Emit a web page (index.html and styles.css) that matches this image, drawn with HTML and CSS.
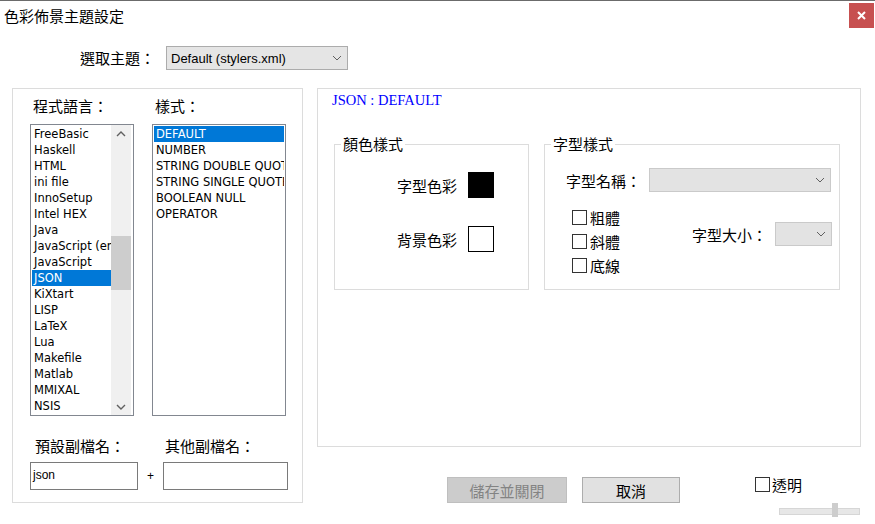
FILE: index.html
```html
<!DOCTYPE html>
<html lang="zh-Hant">
<head>
<meta charset="utf-8">
<title>色彩佈景主題設定</title>
<link rel="stylesheet" href="styles.css">
</head>
<body>
<div class="titlebar">
  <span class="title">色彩佈景主題設定</span>
  <div class="close">
    <svg width="9" height="9" viewBox="0 0 9 9"><path d="M1 1 L8 8 M8 1 L1 8" stroke="#fff" stroke-width="2" fill="none"/></svg>
  </div>
</div>

<div class="theme-row">
  <span class="theme-label">選取主題：</span>
  <div class="combo theme-combo">
    <span>Default (stylers.xml)</span>
    <svg class="chev" width="10" height="6" viewBox="0 0 10 6"><path d="M1 1 L5 5 L9 1" stroke="#606060" stroke-width="1" fill="none"/></svg>
  </div>
</div>

<div class="main">
  <section class="left-panel">
    <div class="lists">
      <div class="lang-col">
        <div class="label lbl-lang">程式語言：</div>
        <div class="listbox lang-list">
          <ul class="items">
            <li>FreeBasic</li>
            <li>Haskell</li>
            <li>HTML</li>
            <li>ini file</li>
            <li>InnoSetup</li>
            <li>Intel HEX</li>
            <li>Java</li>
            <li>JavaScript (embedded)</li>
            <li>JavaScript</li>
            <li class="sel">JSON</li>
            <li>KiXtart</li>
            <li>LISP</li>
            <li>LaTeX</li>
            <li>Lua</li>
            <li>Makefile</li>
            <li>Matlab</li>
            <li>MMIXAL</li>
            <li>NSIS</li>
          </ul>
          <div class="scrollbar">
            <div class="sb-btn">
              <svg width="10" height="6" viewBox="0 0 10 6"><path d="M1 5 L5 1 L9 5" stroke="#606060" stroke-width="1.4" fill="none"/></svg>
            </div>
            <div class="sb-track"><div class="sb-thumb"></div></div>
            <div class="sb-btn">
              <svg width="10" height="6" viewBox="0 0 10 6"><path d="M1 1 L5 5 L9 1" stroke="#606060" stroke-width="1.4" fill="none"/></svg>
            </div>
          </div>
        </div>
      </div>
      <div class="style-col">
        <div class="label lbl-style">樣式：</div>
        <div class="listbox style-list">
          <ul class="items">
            <li class="sel">DEFAULT</li>
            <li>NUMBER</li>
            <li>STRING DOUBLE QUOTE</li>
            <li>STRING SINGLE QUOTE</li>
            <li>BOOLEAN NULL</li>
            <li>OPERATOR</li>
          </ul>
        </div>
      </div>
    </div>
    <div class="ext-row">
      <div class="ext-col ext-default">
        <div class="label lbl-def">預設副檔名：</div>
        <div class="textbox">json</div>
      </div>
      <span class="plus">+</span>
      <div class="ext-col ext-other">
        <div class="label lbl-other">其他副檔名：</div>
        <div class="textbox"></div>
      </div>
    </div>
  </section>

  <div class="right-col">
    <section class="right-panel">
      <div class="heading">JSON : DEFAULT</div>
      <div class="groups">
        <fieldset class="group color-group">
          <legend>顏色樣式</legend>
          <div class="color-rows">
            <div class="color-row"><span>字型色彩</span><div class="swatch fg"></div></div>
            <div class="color-row"><span>背景色彩</span><div class="swatch bg"></div></div>
          </div>
        </fieldset>
        <fieldset class="group font-group">
          <legend>字型樣式</legend>
          <div class="font-body">
            <div class="name-row">
              <span>字型名稱：</span>
              <div class="combo dis name-combo">
                <span></span>
                <svg class="chev" width="10" height="6" viewBox="0 0 10 6"><path d="M1 1 L5 5 L9 1" stroke="#606060" stroke-width="1" fill="none"/></svg>
              </div>
            </div>
            <div class="style-row">
              <div class="checks">
                <div class="check"><span class="box"></span><span>粗體</span></div>
                <div class="check"><span class="box"></span><span>斜體</span></div>
                <div class="check"><span class="box"></span><span>底線</span></div>
              </div>
              <div class="size-area">
                <span>字型大小：</span>
                <div class="combo dis size-combo">
                  <span></span>
                  <svg class="chev" width="10" height="6" viewBox="0 0 10 6"><path d="M1 1 L5 5 L9 1" stroke="#606060" stroke-width="1" fill="none"/></svg>
                </div>
              </div>
            </div>
          </div>
        </fieldset>
      </div>
    </section>

    <div class="actions">
      <div class="btn disabled save">儲存並關閉</div>
      <div class="btn cancel">取消</div>
      <div class="trans">
        <div class="check"><span class="box"></span><span>透明</span></div>
        <div class="slider"><div class="thumb"></div></div>
      </div>
    </div>
  </div>
</div>
</body>
</html>
```

FILE: styles.css
```css
* { box-sizing: border-box; }
html, body { margin: 0; padding: 0; }
body {
  width: 875px;
  height: 524px;
  overflow: hidden;
  background: #fff;
  border-top: 1px solid #6b6b6b;
  font-family: "Noto Sans CJK TC", "Noto Sans CJK SC", sans-serif;
  font-size: 15px;
  color: #000;
}

/* title bar */
.titlebar {
  display: flex;
  justify-content: space-between;
  align-items: flex-start;
  height: 30px;
}
.title {
  padding-left: 4px;
  line-height: 30px;
  font-size: 15px;
}
.close {
  width: 25px;
  height: 25px;
  margin: 2px 1px 0 0;
  background: #c75050;
  display: flex;
  align-items: center;
  justify-content: center;
}

/* theme row */
.theme-row {
  display: flex;
  align-items: center;
  height: 24px;
  margin-top: 15px;
  padding-left: 80px;
}
.theme-label { width: 86px; line-height: 24px; }
.combo {
  display: flex;
  align-items: center;
  justify-content: space-between;
  height: 24px;
  background: #e5e5e5;
  border: 1px solid #acacac;
  padding: 0 5px 0 4px;
  font-family: "Liberation Sans", Arial, sans-serif;
  font-size: 13px;
}
.theme-combo { width: 182px; }
.combo.dis { background: #e3e3e3; border-color: #cacaca; }

/* main */
.main {
  display: flex;
  gap: 14px;
  margin-top: 18px;
  padding-left: 12px;
}
.left-panel {
  width: 291px;
  height: 415px;
  border: 1px solid #dcdcdc;
  padding: 9px 0 0 17px;
}
.label { line-height: 16px; height: 16px; font-size: 15px; white-space: nowrap; }
.lists { display: flex; gap: 18px; }
.lang-col { width: 104px; }
.style-col { width: 134px; }
.lbl-lang, .lbl-style { padding-left: 3px; margin-bottom: 10px; }

.listbox {
  height: 292px;
  border: 1px solid #828790;
  background: #fff;
  overflow: hidden;
}
.lang-list { display: flex; padding: 0 2px 0 0; }
.style-list { padding: 1px; }
.items {
  list-style: none;
  margin: 0;
  padding: 0;
  font-family: "DejaVu Sans", sans-serif;
  font-size: 11.5px;
}
.lang-list .items { flex: 1; padding: 1px 0 0 1px; min-width: 0; }
.items li {
  height: 16px;
  line-height: 16px;
  padding-left: 2px;
  white-space: nowrap;
  overflow: hidden;
}
.items li.sel { background: #0078d7; color: #fff; }

.scrollbar {
  width: 20px;
  flex: none;
  display: flex;
  flex-direction: column;
  background: #f0f0f0;
}
.sb-btn {
  height: 17px;
  display: flex;
  align-items: center;
  justify-content: center;
}
.sb-track { flex: 1; padding-top: 94px; }
.sb-thumb { height: 54px; background: #cdcdcd; }

/* extension row */
.ext-row {
  display: flex;
  align-items: flex-end;
  margin-top: 22px;
}
.ext-default { width: 108px; }
.ext-other { width: 125px; }
.lbl-def { padding-left: 5px; margin-bottom: 8px; }
.lbl-other { padding-left: 2px; margin-bottom: 8px; }
.textbox {
  height: 28px;
  border: 1px solid #7a7a7a;
  padding-left: 2px;
  line-height: 24px;
  font-family: "Liberation Sans", Arial, sans-serif;
  font-size: 12px;
}
.plus {
  width: 25px;
  text-align: center;
  line-height: 28px;
  font-family: "Liberation Sans", Arial, sans-serif;
  font-size: 12px;
}

/* right column */
.right-col { width: 544px; }
.right-panel {
  height: 359px;
  border: 1px solid #dcdcdc;
  padding: 3px 0 0 14px;
}
.heading {
  line-height: 16px;
  font-family: "Liberation Serif", "Times New Roman", serif;
  font-size: 14.5px;
  color: #0000ff;
}
.groups {
  display: flex;
  gap: 15px;
  margin: 28px 0 0 2px;
}
.group {
  margin: 0;
  padding: 0;
  min-width: 0;
  height: 154px;
  border: 1px solid #dcdcdc;
}
.group legend {
  margin-left: 6px;
  padding: 0 2px;
  line-height: 16px;
  font-size: 15px;
}
.color-group { width: 195px; }
.font-group { width: 296px; }

.color-rows {
  display: flex;
  flex-direction: column;
  align-items: flex-end;
  gap: 28px;
  padding: 20px 34px 0 0;
}
.color-row { display: flex; align-items: center; gap: 11px; }
.swatch { width: 26px; height: 26px; }
.swatch.fg { background: #000; }
.swatch.bg { background: #fff; border: 1px solid #000; }

.font-body { padding: 16px 8px 0 21px; }
.name-row { display: flex; align-items: center; }
.name-combo { width: 182px; margin-left: auto; }
.style-row { display: flex; align-items: flex-start; margin-top: 18px; }
.checks {
  display: flex;
  flex-direction: column;
  gap: 9px;
  padding-left: 6px;
}
.check { display: flex; align-items: center; gap: 3px; height: 15px; }
.box {
  width: 15px;
  height: 15px;
  border: 1px solid #333;
  background: #fff;
  flex: none;
}
.size-area {
  display: flex;
  align-items: center;
  gap: 8px;
  margin: 12px -1px 0 auto;
}
.size-combo { width: 57px; }

/* actions */
.actions {
  display: flex;
  align-items: flex-start;
  margin-top: 30px;
  padding-left: 130px;
}
.btn {
  height: 26px;
  display: flex;
  align-items: center;
  justify-content: center;
  font-size: 15px;
  border: 1px solid #adadad;
  background: #e1e1e1;
}
.btn.save { width: 120px; }
.btn.cancel { width: 98px; margin-left: 15px; }
.btn.disabled { background: #cccccc; border-color: #bfbfbf; color: #838383; }

.trans {
  margin-left: auto;
  width: 106px;
  display: flex;
  flex-direction: column;
}
.trans .check { gap: 2px; }
.slider {
  position: relative;
  margin: 11px 0 0 24px;
  width: 81px;
  height: 14px;
}
.slider::before {
  content: "";
  position: absolute;
  left: 0;
  right: 0;
  top: 5px;
  height: 5px;
  background: #e7e7e7;
  border: 1px solid #d6d6d6;
}
.thumb {
  position: absolute;
  left: 53px;
  top: 0;
  width: 6px;
  height: 14px;
  background: #cdcdcd;
}
```
